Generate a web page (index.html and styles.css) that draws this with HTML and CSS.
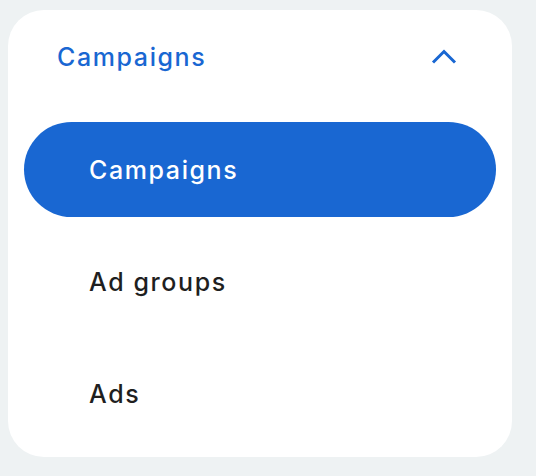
FILE: index.html
```html
<!DOCTYPE html>
<html lang="en">
<head>
    <meta charset="UTF-8">
    <meta name="viewport" content="width=device-width, initial-scale=1.0">
    <title>Campaigns menu</title>
    <link rel="stylesheet" href="styles.css">
</head>
<body>
    <div class="card">
        <div class="card-head">
            <span class="head-title">Campaigns</span>
            <!-- collapse chevron -->
            <svg class="chevron" width="26" height="16" viewBox="0 0 26 16">
                <polyline points="2,13.5 13,2.5 24,13.5" fill="none" stroke="#1967d2" stroke-width="3"></polyline>
            </svg>
        </div>
        <ul class="nav-list">
            <li class="nav-item active">Campaigns</li>
            <li class="nav-item">Ad groups</li>
            <li class="nav-item">Ads</li>
        </ul>
    </div>
</body>
</html>
```

FILE: styles.css
```css
body {
    margin: 0;
    padding: 10px 24px 19px 8px;
    background-color: #eef2f3;
    font-family: Inter, "Open Sans", sans-serif;
}

.card {
    background-color: #ffffff;
    border-radius: 36px;
    padding: 0 16px 16px;
}

.card-head {
    height: 94px;
    display: flex;
    align-items: center;
    justify-content: space-between;
    padding: 0 39px 0 33px;
}

.head-title {
    color: #1967d2;
    font-size: 25px;
    font-weight: 500;
    letter-spacing: 1.6px;
}

.chevron {
    display: block;
}

.nav-list {
    list-style: none;
    margin: 18px 0 0;
    padding: 0;
    display: flex;
    flex-direction: column;
    gap: 17px;
}

.nav-item {
    height: 95px;
    display: flex;
    align-items: center;
    padding-left: 65px;
    border-radius: 48px;
    color: #1f1f1f;
    font-size: 25px;
    font-weight: 500;
    letter-spacing: 1.6px;
}

.nav-item.active {
    background-color: #1967d2;
    color: #ffffff;
}
```
